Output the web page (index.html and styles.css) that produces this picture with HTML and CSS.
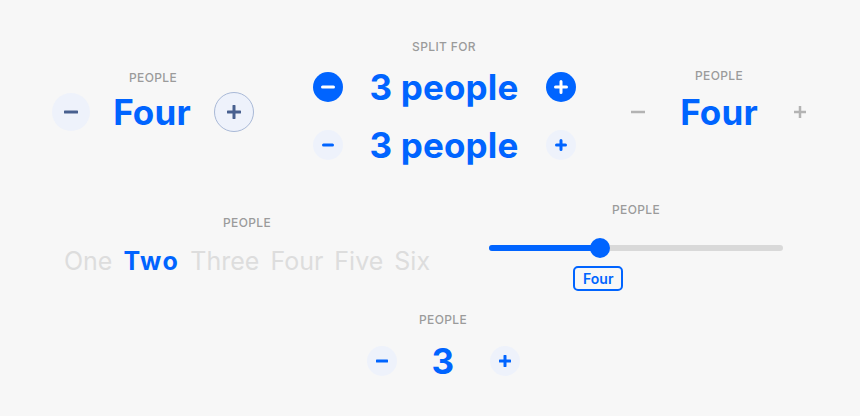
FILE: index.html
```html
<!DOCTYPE html>
<html>
<head>
  <title>People pickers</title>
  <link rel="stylesheet" href="styles.css">
</head>
<body>
  <div class="page">
    <div class="row row-top">
      <div class="picker picker-soft">
        <div class="label">People</div>
        <div class="stepper">
          <button class="round soft" aria-label="Less">
            <svg width="14" height="14" viewBox="0 0 14 14"><path d="M1 7h12" /></svg>
          </button>
          <span class="value">Four</span>
          <button class="round outline" aria-label="More">
            <svg width="14" height="14" viewBox="0 0 14 14"><path d="M1 7h12M7 1v12" /></svg>
          </button>
        </div>
      </div>

      <div class="picker picker-split">
        <div class="label">Split for</div>
        <div class="stepper split-row">
          <button class="round solid" aria-label="Less">
            <svg width="14" height="14" viewBox="0 0 14 14"><path d="M1.5 7h11" /></svg>
          </button>
          <span class="value">3 people</span>
          <button class="round solid" aria-label="More">
            <svg width="14" height="14" viewBox="0 0 14 14"><path d="M1.5 7h11M7 1.5v11" /></svg>
          </button>
        </div>
        <div class="stepper split-row second">
          <button class="round tint" aria-label="Less">
            <svg width="12" height="12" viewBox="0 0 12 12"><path d="M1.5 6h9" /></svg>
          </button>
          <span class="value">3 people</span>
          <button class="round tint" aria-label="More">
            <svg width="12" height="12" viewBox="0 0 12 12"><path d="M1.5 6h9M6 1.5v9" /></svg>
          </button>
        </div>
      </div>

      <div class="picker picker-plain">
        <div class="label">People</div>
        <div class="stepper">
          <button class="bare" aria-label="Less">
            <svg width="16" height="16" viewBox="0 0 16 16"><path d="M1 8h14" /></svg>
          </button>
          <span class="value">Four</span>
          <button class="bare" aria-label="More">
            <svg width="14" height="14" viewBox="0 0 14 14"><path d="M1 7h12M7 1v12" /></svg>
          </button>
        </div>
      </div>
    </div>

    <div class="row row-mid">
      <div class="picker picker-words">
        <div class="label">People</div>
        <div class="words">
          <span>One</span>
          <span class="active">Two</span>
          <span>Three</span>
          <span>Four</span>
          <span>Five</span>
          <span>Six</span>
        </div>
      </div>

      <div class="picker picker-slider">
        <div class="label">People</div>
        <div class="track">
          <div class="fill" style="width: 37.8%"></div>
          <div class="thumb" style="left: 37.8%"></div>
        </div>
        <div class="slider-value">Four</div>
      </div>
    </div>

    <div class="row row-bottom">
      <div class="picker picker-compact">
        <div class="label">People</div>
        <div class="stepper">
          <button class="round tint" aria-label="Less">
            <svg width="12" height="12" viewBox="0 0 12 12"><path d="M1 6h10" /></svg>
          </button>
          <span class="value">3</span>
          <button class="round tint" aria-label="More">
            <svg width="12" height="12" viewBox="0 0 12 12"><path d="M1 6h10M6 1v10" /></svg>
          </button>
        </div>
      </div>
    </div>
  </div>
</body>
</html>
```

FILE: styles.css
```css
body {
  margin: 0;
  background-color: #f7f7f7;
  font-family: Inter, "Noto Sans", sans-serif;
  color: #0064ff;
}
.page {
  width: 860px;
  height: 416px;
  overflow: hidden;
}
.row {
  display: grid;
  align-items: start;
}
.row-top {
  grid-template-columns: 306px 276px 274px;
  justify-items: center;
  padding-top: 39px;
}
.row-mid {
  grid-template-columns: 489px 294px;
  margin-top: 42px;
}
.row-bottom {
  margin-top: 21px;
  padding-left: 26px;
  justify-items: center;
}
.picker {
  display: flex;
  flex-direction: column;
  align-items: center;
}
.label {
  font-size: 12px;
  line-height: 16px;
  font-weight: 500;
  color: #9b9b9b;
  letter-spacing: 0.03em;
  text-transform: uppercase;
}
.value {
  font-size: 35px;
  line-height: 40px;
  font-weight: 700;
  text-align: center;
  letter-spacing: 0.005em;
}
.stepper {
  display: grid;
  align-items: center;
  justify-items: center;
}
button {
  border: none;
  padding: 0;
  background: none;
  display: flex;
  align-items: center;
  justify-content: center;
  cursor: pointer;
}
button svg path {
  fill: none;
  stroke: currentColor;
  stroke-width: 3;
  stroke-linecap: round;
}
.round {
  border-radius: 50%;
}

/* first picker */
.picker-soft {
  margin-top: 31px;
}
.picker-soft .stepper {
  grid-template-columns: 38px 1fr 40px;
  width: 202px;
  height: 40px;
  margin-top: 6px;
}
.soft {
  width: 38px;
  height: 38px;
  background-color: #eef2fb;
  color: #48608f;
}
.outline {
  width: 40px;
  height: 40px;
  box-sizing: border-box;
  background-color: #eef2fb;
  border: 1.5px solid #a9b9d7;
  color: #48608f;
}

/* split picker */
.split-row {
  grid-template-columns: 30px 1fr 30px;
  width: 263px;
  height: 30px;
  margin-top: 17px;
}
.split-row .value {
  line-height: 30px;
}
.split-row.second {
  margin-top: 28px;
}
.solid {
  width: 30px;
  height: 30px;
  background-color: #0064ff;
  color: #fff;
}
.tint {
  width: 30px;
  height: 30px;
  background-color: #eef2fb;
  color: #0064ff;
}

/* plain picker */
.picker-plain {
  margin-top: 29px;
}
.picker-plain .stepper {
  grid-template-columns: 24px 1fr 24px;
  width: 186px;
  height: 40px;
  margin-top: 8px;
}
.bare {
  width: 24px;
  height: 24px;
  color: #b3b3b3;
}
.bare svg path {
  stroke-width: 2.5;
  stroke-linecap: butt;
}

/* word picker */
.picker-words {
  margin-top: 13px;
  padding-left: 5px;
}
.words {
  display: flex;
  gap: 11px;
  margin-top: 14px;
  font-size: 25px;
  line-height: 32px;
  color: #dddddd;
}
.words .active {
  color: #0064ff;
  font-weight: 700;
  letter-spacing: 0.06em;
}

/* slider picker */
.picker-slider {
  width: 294px;
}
.track {
  position: relative;
  width: 294px;
  height: 6px;
  margin-top: 26.5px;
  border-radius: 3px;
  background-color: #d9d9d9;
}
.fill {
  height: 6px;
  border-radius: 3px;
  background-color: #0064ff;
}
.thumb {
  position: absolute;
  top: -7px;
  width: 20px;
  height: 20px;
  margin-left: -10px;
  border-radius: 50%;
  background-color: #0064ff;
}
.slider-value {
  align-self: flex-start;
  margin-left: 84px;
  margin-top: 15.5px;
  padding: 0 8px;
  border: 2px solid #0064ff;
  border-radius: 5px;
  font-size: 14px;
  line-height: 21px;
  font-weight: 600;
}

/* compact picker */
.picker-compact .stepper {
  grid-template-columns: 30px 1fr 30px;
  width: 153px;
  height: 30px;
  margin-top: 18px;
}
.picker-compact .value {
  line-height: 30px;
}
```
